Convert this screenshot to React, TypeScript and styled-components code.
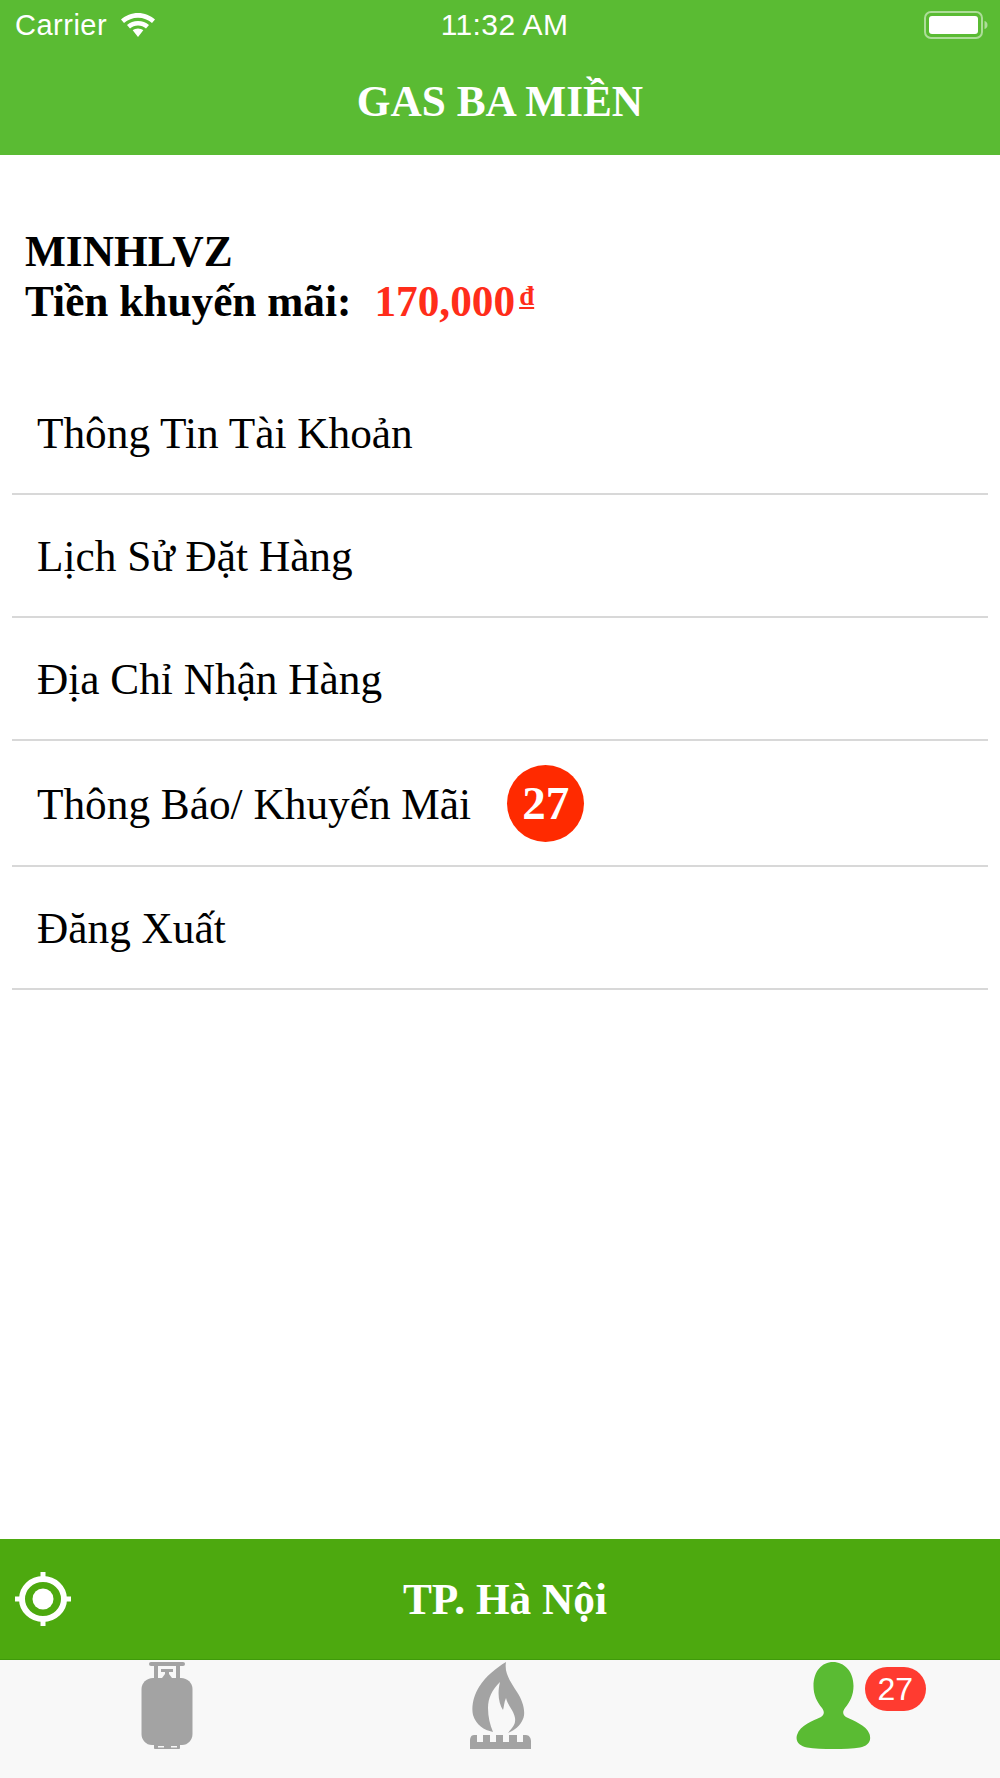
import React from 'react';
import styled, { createGlobalStyle } from 'styled-components';

const GlobalStyle = createGlobalStyle`
  html, body {
    margin: 0;
    padding: 0;
    background: #ffffff;
  }
`;

const serif = `"Liberation Serif", "Times New Roman", serif`;
const sans = `"Liberation Sans", Arial, sans-serif`;

const Page = styled.div`
  width: 1000px;
  height: 1778px;
  display: flex;
  flex-direction: column;
  background: #ffffff;
  font-family: ${serif};
  color: #000000;
  overflow: hidden;
`;

const Header = styled.header`
  height: 155px;
  flex: none;
  background: #5abb33;
  color: #ffffff;
`;

const StatusBar = styled.div`
  height: 50px;
  display: grid;
  grid-template-columns: 1fr auto 1fr;
  align-items: center;
  padding: 0 12px 0 15px;
  font-family: ${sans};
  font-size: 29px;
`;

const StatusLeft = styled.div`
  display: flex;
  align-items: center;
  gap: 14px;
  letter-spacing: 0.5px;
`;

const StatusTime = styled.span`
  margin-left: 6px;
  font-size: 30px;
  letter-spacing: 0.4px;
`;

const StatusRight = styled.div`
  display: flex;
  justify-content: flex-end;
`;

const NavTitle = styled.h1`
  margin: 0;
  text-align: center;
  font-size: 43.3px;
  line-height: 48px;
  font-weight: bold;
  padding-top: 27px;
`;

const Content = styled.main`
  flex: 1;
  display: flex;
  flex-direction: column;
`;

const Summary = styled.section`
  padding: 71px 25px 46px;
  font-size: 43.3px;
  line-height: 50px;
  font-weight: bold;
`;

const Amount = styled.span`
  color: #ff2d1a;
  margin-left: 23px;
`;

const Currency = styled.span`
  font-size: 27px;
  text-decoration: underline;
  vertical-align: 11px;
  line-height: 0;
  margin-left: 4px;
`;

const Menu = styled.nav`
  margin: 0 12px;
  display: flex;
  flex-direction: column;
`;

const MenuRow = styled.div`
  display: flex;
  align-items: center;
  padding: 24px 25px 23px;
  border-bottom: 2px solid #d8d8d8;
  font-size: 43.3px;
  line-height: 74px;
`;

const CountBadge = styled.span`
  width: 77px;
  height: 77px;
  margin-left: 36px;
  border-radius: 50%;
  background: #ff2a00;
  color: #ffffff;
  font-weight: bold;
  font-size: 47px;
  line-height: 77px;
  text-align: center;
`;

const CityBar = styled.div`
  height: 120px;
  flex: none;
  display: grid;
  grid-template-columns: 1fr auto 1fr;
  align-items: center;
  padding-left: 10px;
  background: #4da90f;
  border-bottom: 1px solid #3f9a0a;
  color: #ffffff;
`;

const CityTitle = styled.div`
  font-size: 43.3px;
  font-weight: bold;
  line-height: 48px;
`;

const LocateButton = styled.div`
  display: flex;
  margin-left: 5px;
`;

const TabBar = styled.div`
  height: 118px;
  flex: none;
  display: grid;
  grid-template-columns: repeat(3, 1fr);
  background: #f8f8f8;
`;

const Tab = styled.div`
  display: flex;
  justify-content: center;
  align-items: flex-start;
  padding-top: 2px;
`;

const TabIconWrap = styled.div`
  position: relative;
  display: flex;
`;

const TabBadge = styled.span`
  position: absolute;
  left: 69px;
  top: 5px;
  width: 61px;
  height: 44px;
  border-radius: 22px;
  background: #ff3b30;
  color: #ffffff;
  font-family: ${sans};
  font-size: 32px;
  line-height: 44px;
  text-align: center;
`;

const WifiIcon = () => (
  <svg width="34" height="24" viewBox="0 0 34 24" fill="#ffffff">
    <path d="M17 0C10.500 0 4.700 2.500 0 6.500L3 10C6.800 6.700 11.700 4.700 17 4.700S27.200 6.700 31 10L34 6.500C29.300 2.500 23.500 0 17 0Z" />
    <path d="M17 8C12.800 8 9 9.500 6 12L9 15.500C11.200 13.700 14 12.600 17 12.600S22.800 13.700 25 15.500L28 12C25 9.500 21.200 8 17 8Z" />
    <path d="M17 15.500C15 15.500 13.200 16.200 11.700 17.300L17 24L22.300 17.300C20.800 16.200 19 15.500 17 15.500Z" />
  </svg>
);

const BatteryIcon = () => (
  <svg width="64" height="28" viewBox="0 0 64 28">
    <rect x="1" y="1" width="57" height="26" rx="6" fill="none" stroke="#ffffff" strokeOpacity="0.5" strokeWidth="2" />
    <rect x="5" y="5" width="49" height="18" rx="3" fill="#ffffff" />
    <path d="M60.500 10C62.500 10.500 63.500 12 63.500 14S62.500 17.500 60.500 18Z" fill="#ffffff" fillOpacity="0.5" />
  </svg>
);

const LocateIcon = () => (
  <svg width="56" height="54" viewBox="0 0 56 54">
    <ellipse cx="28" cy="27" rx="21" ry="20" fill="none" stroke="#ffffff" strokeWidth="6" />
    <ellipse cx="28" cy="27" rx="10.500" ry="10.500" fill="#ffffff" />
    <rect x="25.500" y="0" width="5" height="8" fill="#ffffff" />
    <rect x="25.500" y="46" width="5" height="8" fill="#ffffff" />
    <rect x="0" y="24.500" width="8" height="5" fill="#ffffff" />
    <rect x="48" y="24.500" width="8" height="5" fill="#ffffff" />
  </svg>
);

const CylinderIcon = () => (
  <svg width="52" height="87" viewBox="0 0 52 87" fill="#a3a3a3">
    <rect x="8" y="0" width="36" height="4" rx="2" />
    <rect x="13" y="3" width="4" height="15" />
    <rect x="35" y="3" width="4" height="15" />
    <path d="M20 7H32V10H28V12L31 16V19H21V16L24 12V10H20Z" />
    <path d="M12 16H40C46.500 16 51.500 21 51.500 27V72C51.500 78 47 83 41 83H11C5 83 .5 78 .5 72V27C.5 21 5.500 16 12 16Z" />
    <path d="M13 82H39V86C39 86.500 38.500 87 38 87H14C13.500 87 13 86.500 13 86Z" />
    <rect x="17" y="84" width="6" height="1.500" fill="#f8f8f8" />
    <rect x="30" y="84" width="6" height="1.500" fill="#f8f8f8" />
  </svg>
);

const FlameIcon = () => (
  <svg width="62" height="88" viewBox="0 0 62 88" fill="#a3a3a3">
    <path d="M37 0C35 12 42 20 48 30C54 39 57 50 54 57C51 64 46 68 39 71C43 66 47 63 46 56C45 49 39 44 37 36C35 40 35 45 34 48C30 42 28 32 31 20C23 28 19 36 19 46C19 55 21 63 24 70C15 68 7 63 4 53C2 44 5 33 10 25C17 14 27 6 37 0Z" />
    <path d="M5 73H8V80H14V73H21V80H27V73H34V80H40V73H48V80H54V73H57C60 73 62 76 62 79V87H1V79C1 76 2 73 5 73Z" />
  </svg>
);

const PersonIcon = () => (
  <svg width="75" height="87" viewBox="0 0 75 87" fill="#5abb33">
    <path d="M37 0C48 0 57.500 9 57.500 24C57.500 33 54 40 49 46C46 50 47 53 50 55C58 59 70 63 73.500 72C76 80 71 84 64 85.500C50 87.500 25 87.500 11 85.500C4 84 -1 80 1 73C4 63 17 59 25 55C28 53 29 50 26 46C21 40 17.500 33 17.500 24C17.500 9 26 0 37 0Z" />
  </svg>
);

const menuItems = [
  { label: 'Thông Tin Tài Khoản' },
  { label: 'Lịch Sử Đặt Hàng' },
  { label: 'Địa Chỉ Nhận Hàng' },
  { label: 'Thông Báo/ Khuyến Mãi', count: 27 },
  { label: 'Đăng Xuất' },
];

export default function App() {
  return (
    <Page>
      <GlobalStyle />
      <Header>
        <StatusBar>
          <StatusLeft>
            <span>Carrier</span>
            <WifiIcon />
          </StatusLeft>
          <StatusTime>11:32 AM</StatusTime>
          <StatusRight>
            <BatteryIcon />
          </StatusRight>
        </StatusBar>
        <NavTitle>GAS BA MIỀN</NavTitle>
      </Header>
      <Content>
        <Summary>
          <div>MINHLVZ</div>
          <div>
            Tiền khuyến mãi:
            <Amount>
              170,000<Currency>đ</Currency>
            </Amount>
          </div>
        </Summary>
        <Menu>
          {menuItems.map((item) => (
            <MenuRow key={item.label}>
              {item.label}
              {item.count ? <CountBadge>{item.count}</CountBadge> : null}
            </MenuRow>
          ))}
        </Menu>
      </Content>
      <CityBar>
        <LocateButton>
          <LocateIcon />
        </LocateButton>
        <CityTitle>TP. Hà Nội</CityTitle>
      </CityBar>
      <TabBar>
        <Tab>
          <CylinderIcon />
        </Tab>
        <Tab>
          <FlameIcon />
        </Tab>
        <Tab>
          <TabIconWrap>
            <PersonIcon />
            <TabBadge>27</TabBadge>
          </TabIconWrap>
        </Tab>
      </TabBar>
    </Page>
  );
}
